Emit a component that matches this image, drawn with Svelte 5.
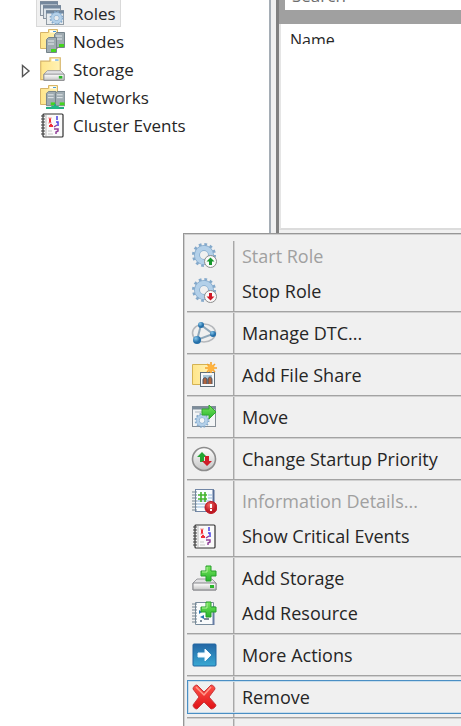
<script>
  const treeItems = [
    { label: "Roles", icon: "roles" },
    { label: "Nodes", icon: "nodes" },
    { label: "Storage", icon: "storage", expandable: true },
    { label: "Networks", icon: "networks" },
    { label: "Cluster Events", icon: "events" },
  ];

  const menuGroups = [
    [
      { label: "Start Role", icon: "start", disabled: true },
      { label: "Stop Role", icon: "stop" },
    ],
    [{ label: "Manage DTC...", icon: "dtc" }],
    [{ label: "Add File Share", icon: "share" }],
    [{ label: "Move", icon: "move" }],
    [{ label: "Change Startup Priority", icon: "priority" }],
    [
      { label: "Information Details...", icon: "details", disabled: true },
      { label: "Show Critical Events", icon: "events" },
    ],
    [
      { label: "Add Storage", icon: "addStorage" },
      { label: "Add Resource", icon: "addResource" },
    ],
    [{ label: "More Actions", icon: "more" }],
    [{ label: "Remove", icon: "remove" }],
  ];

  let selected = $state("Roles");
  let active = $state("Remove");
  let search = $state("");
</script>

{#snippet icon(name)}
  <svg class="icon" viewBox="0 0 26 26" aria-hidden="true">
    {#if name === "roles"}
      <rect x="1.5" y="1.5" width="17" height="14" fill="#e4e9ed" stroke="#8994a0" />
      <path d="M1 3h18" stroke="#74879c" stroke-width="3" />
      <rect x="4.5" y="5.5" width="17" height="13" fill="#dce3e9" stroke="#8994a0" />
      <path d="M4 7h18" stroke="#74879c" stroke-width="3" />
      <rect x="7.5" y="10.5" width="17" height="14" fill="#e7ebee" stroke="#929ca5" />
      <path d="M7 12h18" stroke="#71869c" stroke-width="3" />
      <use href="#gear" transform="translate(10 11) scale(.58)" />
    {:else if name === "nodes"}
      <use href="#folder" />
      <use href="#server" transform="translate(15 4)" />
      <use href="#server" transform="translate(7 9)" />
    {:else if name === "storage"}
      <use href="#folder" transform="scale(1.15)" />
      <use href="#drive" transform="translate(4 12) scale(.88)" />
    {:else if name === "networks"}
      <use href="#folder" />
      <use href="#server" transform="translate(7 7) scale(.95)" />
      <use href="#server" transform="translate(16 7) scale(.95)" />
      <path d="M7 24h18M16 20v4" stroke="#23ae7f" stroke-width="2" />
      <rect x="12" y="22" width="8" height="3" rx="1" fill="#20b883" />
    {:else if name === "events"}
      <rect x="4" y="2" width="20" height="23" rx="1" fill="#fafafa" stroke="#303030" stroke-width="1.2" />
      <path d="M7 3v21" stroke="#bbb" />
      <path d="M2 4h4M2 7h4M2 10h4M2 13h4M2 16h4M2 19h4M2 22h4" stroke="#444" stroke-width="1.2" />
      <path d="M11 6v5M10 14h4M12 12v2" stroke="#f0303a" stroke-width="2" />
      <path d="M9 6h4M9 11h4" stroke="#f5a3a6" />
      <path d="M18 4v4M17 10h2v4" fill="none" stroke="#4a40e4" stroke-width="1.5" />
      <path d="M15 15l3-2M15 17h4v2l-2 1v2" fill="none" stroke="#93429a" stroke-width="1.5" />
      <path d="M9 19h4M9 22h5" stroke="#c6c6c6" />
    {:else if name === "start" || name === "stop"}
      <use href="#gear" />
      <circle cx="19.5" cy="18.5" r="6" fill="#fafafa" stroke="#8d8d8d" />
      {#if name === "start"}
        <path d="M19.5 14.5l-4 4h2.5v3.5h3v-3.5h2.5z" fill="#17972c" />
      {:else}
        <path d="M19.5 22.5l-4-4h2.5v-3.5h3v3.5h2.5z" fill="#cf1826" />
      {/if}
    {:else if name === "dtc"}
      <ellipse cx="13" cy="13" rx="11.5" ry="9" fill="none" stroke="#b5b8bc" stroke-width="1.6" />
      <path d="M10 5L6 20L22 14z" fill="none" stroke="#8fa7b9" stroke-width="2" />
      <circle cx="10" cy="5" r="3" fill="url(#blueBall)" />
      <circle cx="22" cy="14" r="3" fill="url(#blueBall)" />
      <circle cx="6" cy="20" r="4" fill="url(#blueBall)" />
    {:else if name === "share"}
      <path d="M1.5 2.5h17v20h-17z" fill="url(#paper)" stroke="#d4b253" />
      <rect x="9.5" y="10.5" width="14" height="14" fill="#f6f8f9" stroke="#5f6e79" />
      <path d="M12 13h9v9h-9z" fill="#a9c5d6" />
      <path d="M12 22v-4c0-3 4-3 4 0v4M17 22v-4c0-4 4-4 4 0v4" fill="#af643f" stroke="#4a5260" />
      <path d="M20 0v11M14 6h12M16 2l8 8M24 2l-8 8" stroke="#f5a32c" stroke-width="1.6" />
      <circle cx="20" cy="6" r="3.5" fill="#ffb33e" />
    {:else if name === "move"}
      <rect x="1.5" y="2.5" width="23" height="20" fill="#f3f5f6" stroke="#858e96" />
      <path d="M1 4h24" stroke="#7c8c9a" stroke-width="3" />
      <path d="M4 8h7" stroke="#adb7bf" />
      <use href="#gear" transform="translate(3 9) scale(.62)" />
      <path d="M11 5h7V1l7 7-7 7v-4h-7z" fill="url(#green)" stroke="#32a830" />
    {:else if name === "priority"}
      <circle cx="13" cy="13" r="11.5" fill="url(#silver)" stroke="#8c8c8c" stroke-width="1.6" />
      <path d="M11 6l-5 5h3v5h4v-5h3z" fill="#24a533" />
      <path d="M16 20l-5-5h3v-5h4v5h3z" fill="#ce1e29" />
    {:else if name === "details"}
      <rect x="4.5" y="1.5" width="18" height="22" fill="#f9fcff" stroke="#7186a5" />
      <path d="M22.5 2v21" stroke="#566f98" stroke-width="2" />
      <path d="M6 13h14M6 16h14M6 19h14M17 7h4M17 10h4" stroke="#91b5d8" />
      <path d="M7 7h9M7 11h9M10 4v10M14 4v10" stroke="#43b42e" stroke-width="1.6" />
      <use href="#spiral" />
      <circle cx="20" cy="19.5" r="6" fill="url(#redBall)" stroke="#bd1520" />
      <path d="M20 16v4M20 21v2" stroke="#fff" stroke-width="2" />
    {:else if name === "addStorage"}
      <use href="#drive" transform="translate(1 11)" />
      <use href="#plus" transform="translate(10 0)" />
    {:else if name === "addResource"}
      <path d="M4.5 2.5h18v22h-18z" fill="#f9fbfc" stroke="#788c9d" />
      <path d="M22.5 6v19" stroke="#667da5" stroke-width="2" />
      <use href="#spiral" />
      <path d="M8 10l3 2-3 2zM9 17l4-2v4z" fill="#2676ae" />
      <path d="M9 21h2M13 19h5" stroke="#53657a" stroke-width="1.5" />
      <use href="#plus" transform="translate(10 1)" />
    {:else if name === "more"}
      <rect x="2" y="2" width="23" height="22" rx="1" fill="url(#blue)" stroke="#2067a1" />
      <path d="M7 11h7V7l6 6-6 6v-4H7z" fill="#fff" stroke="#eaf7ff" />
    {:else if name === "remove"}
      <path d="M6 1l7 7 7-7c2 0 4 2 4 4l-6 8 7 8c0 2-3 4-5 4l-7-7-7 7c-2 0-4-2-4-4l6-8-6-8c0-2 2-4 4-4z" fill="url(#red)" stroke="#c9373b" stroke-linejoin="round" />
      <path d="M5 3l8 8 7-8" fill="none" stroke="#ff9a8c" stroke-width="1.5" />
    {/if}
  </svg>
{/snippet}

<svg class="definitions" aria-hidden="true">
  <defs>
    <linearGradient id="paper"><stop stop-color="#ffe58a" /><stop offset="1" stop-color="#fff2b5" /></linearGradient>
    <linearGradient id="blue" x2="0" y2="1"><stop stop-color="#2467a5" /><stop offset="1" stop-color="#38a8d3" /></linearGradient>
    <linearGradient id="red" x2="0" y2="1"><stop stop-color="#ff5349" /><stop offset="1" stop-color="#df1116" /></linearGradient>
    <linearGradient id="green" x2="0" y2="1"><stop stop-color="#7be65f" /><stop offset="1" stop-color="#25b52c" /></linearGradient>
    <linearGradient id="silver" x2="0" y2="1"><stop stop-color="#fff" /><stop offset="1" stop-color="#c4c4c4" /></linearGradient>
    <radialGradient id="blueBall" cx=".35" cy=".3"><stop stop-color="#86c6ea" /><stop offset="1" stop-color="#246fa9" /></radialGradient>
    <radialGradient id="redBall" cx=".4" cy=".3"><stop stop-color="#f36c68" /><stop offset="1" stop-color="#bd1a24" /></radialGradient>
    <g id="gear" fill="none">
      <circle cx="13" cy="12" r="10.5" stroke="#84a9cb" stroke-width="3" stroke-dasharray="2.7 2.8" />
      <circle cx="13" cy="12" r="7" stroke="#84a9cb" stroke-width="6" />
      <circle cx="13" cy="12" r="7" stroke="#b3d0e9" stroke-width="4.5" />
    </g>
    <g id="folder">
      <path d="M1.5 4.5h8v-3h9v19h-17z" fill="url(#paper)" stroke="#d6b469" />
      <path d="M11 3.5h6" stroke="#fff" stroke-width="2" />
      <path d="M14 3.5h3" stroke="#4c9cdb" />
    </g>
    <g id="server">
      <path d="M.5 2.5l2-2h8v15H.5z" fill="#a0acb2" stroke="#75838a" />
      <path d="M2 4h6M2 7h6" stroke="#e6ebee" />
      <path d="M5 12h5v3H5z" fill="#43d51d" />
    </g>
    <g id="drive">
      <path d="M1 7l4-4h15l4 4v7H1z" fill="#e0e0e2" stroke="#9b9b9f" stroke-linejoin="round" />
      <path d="M1 7h23v7H1z" fill="url(#silver)" stroke="#85868a" />
      <path d="M18 9h4v3h-4z" fill="#2bb52b" />
    </g>
    <g id="plus">
      <path d="M5 1h5v5h5v5h-5v5H5v-5H0V6h5z" fill="url(#green)" stroke="#279f2b" stroke-linejoin="round" />
      <path d="M6 2v5H1" fill="none" stroke="#b2f39b" />
    </g>
    <path id="spiral" d="M1 4h5M1 7h5M1 10h5M1 13h5M1 16h5M1 19h5M1 22h5" stroke="#748590" />
  </defs>
</svg>

<main>
  <nav class="tree" aria-label="Cluster">
    <ul>
      {#each treeItems as item (item.label)}
        <li>
          {#if item.expandable}
            <button class="expand" aria-label={item.label}>
              <svg viewBox="0 0 10 16"><path d="M1.5 2.5v11L8 8z" fill="#fff" stroke="#555" stroke-width="1.4" /></svg>
            </button>
          {/if}
          <button
            class="node"
            class:selected={selected === item.label}
            onclick={() => (selected = item.label)}
          >
            {@render icon(item.icon)}
            <span>{item.label}</span>
          </button>
        </li>
      {/each}
    </ul>
  </nav>

  <section class="pane">
    <div class="toolbar">
      <input type="text" aria-label="Search" placeholder="Search" bind:value={search} />
    </div>
    <div class="list">
      <div class="heading">Name</div>
    </div>
    <div class="details"></div>
  </section>

  <ul class="menu">
    {#each menuGroups as group, groupIndex}
      {#if groupIndex > 0}
        <li class="separator" role="separator"></li>
      {/if}
      {#each group as item (item.label)}
        <li class="entry">
          <button
            class="item"
            class:active={active === item.label}
            disabled={item.disabled}
            onmouseenter={() => (active = item.label)}
          >
            {@render icon(item.icon)}
            <span>{item.label}</span>
          </button>
        </li>
      {/each}
    {/each}
    <li class="separator" role="separator"></li>
  </ul>
</main>

<style>
  :global(body) {
    margin: 0;
    background: #fff;
  }
  main {
    position: relative;
    display: flex;
    height: 100vh;
    overflow: hidden;
    font-family: "Segoe UI", "Open Sans", sans-serif;
    font-size: 17px;
    color: #262626;
  }
  .definitions {
    position: absolute;
    width: 0;
    height: 0;
  }
  ul {
    list-style: none;
    margin: 0;
    padding: 0;
  }
  button {
    font: inherit;
    color: inherit;
    background: none;
    border: 1px solid transparent;
    padding: 0;
    text-align: left;
  }
  .icon {
    flex: none;
    width: 26px;
    height: 26px;
  }
  .tree {
    flex: none;
    width: 269px;
    border-right: 2px solid #a5adb5;
  }
  .tree ul {
    margin-top: -1px;
  }
  .tree li {
    display: flex;
    height: 28px;
    padding-left: 20px;
  }
  .expand {
    width: 16px;
    margin-right: -16px;
    padding-top: 4px;
  }
  .expand svg {
    display: block;
    width: 10px;
    height: 16px;
  }
  .node {
    display: flex;
    align-items: center;
    gap: 8px;
    margin-left: 16px;
    padding: 0 4px 0 2px;
    white-space: nowrap;
  }
  .node.selected {
    background: #f0f0f0;
    border-color: #d9d9d9;
  }
  .pane {
    flex: 1;
    display: flex;
    flex-direction: column;
    margin-left: 5px;
    border-left: 3px solid #808080;
    box-shadow: -5px 0 #f0f0f0;
  }
  .toolbar {
    height: 24px;
    padding-left: 6px;
    background: #a0a0a0;
  }
  .toolbar input {
    display: block;
    box-sizing: border-box;
    width: 100%;
    height: 30px;
    margin-top: -20px;
    padding: 0 7px;
    border: 0;
    outline: 0;
    background: #fff;
    font: inherit;
  }
  .toolbar input::placeholder {
    color: #6d6d6d;
    opacity: 1;
  }
  .list {
    height: 204px;
    border-left: 2px solid #e5e5e5;
    border-bottom: 2px solid #dcdcdc;
  }
  .heading {
    height: 14px;
    padding: 6px 0 0 9px;
    overflow: hidden;
    font-size: 16px;
    line-height: 20px;
  }
  .details {
    flex: 1;
    background: #f0f0f0;
  }
  .menu {
    position: absolute;
    top: 233px;
    left: 183px;
    right: -8px;
    padding: 5px 3px 16px;
    background: linear-gradient(90deg, #a8a8a8 1px, #d0d0d0 1px) 49px 7px / 2px 100% no-repeat #f0f0f0;
    border: 1px solid #979797;
    box-shadow: inset 1px 1px #cfcfcf;
    font-size: 18px;
  }
  .entry {
    height: 35px;
  }
  .item {
    display: flex;
    align-items: center;
    gap: 25px;
    box-sizing: border-box;
    width: 100%;
    height: 34px;
    padding-left: 3px;
    white-space: nowrap;
  }
  .item:disabled {
    color: #a0a0a0;
  }
  .item.active {
    border-color: #4a8fc4;
    box-shadow: inset 0 0 0 1px #c9ddeb;
  }
  .separator {
    height: 1px;
    margin: 2px 0 3px;
    background: #a3a3a3;
    border-bottom: 1px solid #d0d0d0;
  }
</style>
